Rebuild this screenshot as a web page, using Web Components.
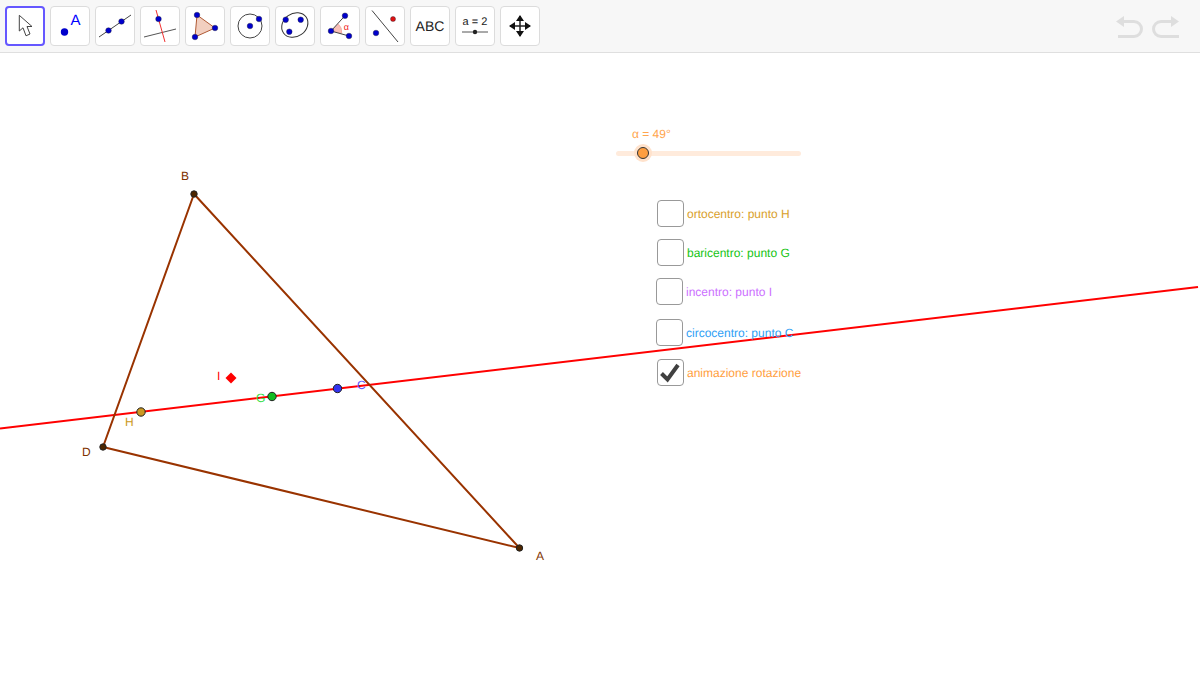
<!DOCTYPE html>
<html lang="it">
<head>
<meta charset="utf-8">
<title>Triangolo</title>
<style>
html,body{margin:0;padding:0;background:#fff;height:100%;overflow:hidden}
body{font-family:"Liberation Sans",Arial,sans-serif;text-rendering:geometricPrecision}
</style>
</head>
<body>
<ggb-app></ggb-app>
<script>
class ToolButton extends HTMLElement{
  constructor(){super();this.attachShadow({mode:'open'}).innerHTML=`<style>
    :host{display:block;width:40px;height:40px;box-sizing:border-box;background:#fff;border:1px solid #dcdcdc;border-radius:4px;position:relative;flex:none}
    :host([selected]){border:2px solid #6557ff}
    ::slotted(svg){position:absolute;left:-1px;top:-1px;display:block}
    :host([selected]) ::slotted(svg){left:-2px;top:-2px}
  </style><slot></slot>`;}
}
customElements.define('tool-button',ToolButton);

class UndoBar extends HTMLElement{
  constructor(){super();this.attachShadow({mode:'open'}).innerHTML=`<style>
    :host{display:flex;gap:6px;margin-left:auto;margin-right:20px;align-self:flex-start;margin-top:6px}
    svg{display:block}
  </style>
  <svg width="29" height="28" viewBox="0 0 29 28"><path d="M8 9.500H19a7 7 0 0 1 0 15H3" fill="none" stroke="#dedede" stroke-width="3"/><path d="M1 9.500L9 4V15Z" fill="#dedede"/></svg>
  <svg width="30" height="28" viewBox="0 0 30 28"><path d="M21 9.500H11a7 7 0 0 0 0 15H29" fill="none" stroke="#dedede" stroke-width="3"/><path d="M29 9.500L21 4V15Z" fill="#dedede"/></svg>`;}
}
customElements.define('undo-bar',UndoBar);

const P=(x,y,r=2.8,f='#0000cc')=>`<circle cx="${x}" cy="${y}" r="${r}" fill="${f}" stroke="#223" stroke-width=".4"/>`;
const ic=b=>`<svg width="40" height="40" viewBox="0 0 40 40" xmlns="http://www.w3.org/2000/svg" font-family="Liberation Sans, Arial, sans-serif">${b}</svg>`;

class GgbToolbar extends HTMLElement{
  constructor(){super();this.attachShadow({mode:'open'}).innerHTML=`<style>
    :host{display:flex;box-sizing:border-box;height:53px;background:#f7f7f7;border-bottom:1px solid #dfdfdf;padding:6px 0 0 5px;gap:5px;flex:none}
  </style>
  <tool-button selected>${ic(`<path d="M14.300 9.300V25L18 21.800L21 29.800L25 28L22 20.500H27Z" fill="#fff" stroke="#444" stroke-width="1" stroke-linejoin="round"/>`)}</tool-button>
  <tool-button>${ic(`<circle cx="14.500" cy="26" r="3.700" fill="#0000cc"/><text x="20.500" y="19" font-size="15" fill="#0000ff">A</text>`)}</tool-button>
  <tool-button>${ic(`<line x1="4" y1="31" x2="36" y2="9" stroke="#444" stroke-width="1"/>${P(13.5,24.5)}${P(26.5,15.5)}`)}</tool-button>
  <tool-button>${ic(`<line x1="4" y1="31" x2="36" y2="23" stroke="#555" stroke-width="1"/><line x1="16" y1="4" x2="25" y2="36" stroke="#f03030" stroke-width="1"/>${P(18.5,13)}`)}</tool-button>
  <tool-button>${ic(`<path d="M12 9L30 22L10 31Z" fill="#f2cfc0" stroke="#b05a35" stroke-width="1"/>${P(12,9)}${P(30,22)}${P(10,31)}`)}</tool-button>
  <tool-button>${ic(`<circle cx="20" cy="20" r="12" fill="none" stroke="#444" stroke-width="1"/>${P(20,20)}${P(29,13)}`)}</tool-button>
  <tool-button>${ic(`<ellipse cx="19.800" cy="19" rx="13.800" ry="11.500" transform="rotate(-35 19.800 19)" fill="none" stroke="#333" stroke-width="1"/>${P(10.7,13.7)}${P(25.7,13.7)}${P(14.3,25.7)}`)}</tool-button>
  <tool-button>${ic(`<path d="M11 25L18.300 18A10.500 10.500 0 0 1 21.700 27.300Z" fill="#f9c0b8" stroke="#ee9a90" stroke-width=".6"/><path d="M25 9.700L11 25L29 30" fill="none" stroke="#444" stroke-width="1"/><text x="23.800" y="23.500" font-size="9" fill="#f02020">α</text>${P(25,9.7)}${P(11,25)}${P(29,30)}`)}</tool-button>
  <tool-button>${ic(`<line x1="7" y1="4.500" x2="33" y2="36" stroke="#444" stroke-width="1"/>${P(28,13,2.5,'#e01010')}${P(11,27)}`)}</tool-button>
  <tool-button>${ic(`<text x="20" y="25" font-size="14" fill="#222" text-anchor="middle">ABC</text>`)}</tool-button>
  <tool-button>${ic(`<text x="20" y="19" font-size="11" fill="#222" text-anchor="middle">a = 2</text><line x1="7" y1="26" x2="33" y2="26" stroke="#555" stroke-width="1"/><circle cx="20" cy="26" r="2.200" fill="#222"/>`)}</tool-button>
  <tool-button>${ic(`<path d="M20 10V30M10 20H30" stroke="#222" stroke-width="1.500"/><path d="M20 9L16 15H24ZM20 31L16 25H24ZM9 20L15 16V24ZM31 20L25 16V24Z" fill="#111"/>`)}</tool-button>
  <undo-bar></undo-bar>`;}
}
customElements.define('ggb-toolbar',GgbToolbar);

class GgbCheck extends HTMLElement{
  constructor(){super();this.attachShadow({mode:'open'}).innerHTML=`<style>
    :host{position:absolute;display:flex;align-items:center;gap:3px;font:12px "Liberation Sans",Arial,sans-serif;white-space:nowrap;color:var(--c)}
    .b{width:27px;height:27px;box-sizing:border-box;border:1.500px solid #999;border-radius:4px;display:block;flex:none}
    svg{display:block;overflow:visible}
  </style><span class="b"></span><slot></slot>`;}
  connectedCallback(){ if(this.hasAttribute('checked')) this.shadowRoot.querySelector('.b').innerHTML='<svg width="24" height="24" viewBox="0 0 24 24"><path d="M3.500 13.500L9.500 19.500L20 5" fill="none" stroke="#404040" stroke-width="4"/></svg>'; }
}
customElements.define('ggb-check',GgbCheck);

class GgbSlider extends HTMLElement{
  constructor(){super();this.attachShadow({mode:'open'}).innerHTML=`<style>
    :host{position:absolute;left:616px;top:73px;width:185px;height:36px;display:block;font:12px "Liberation Sans",Arial,sans-serif;color:#ffa54d}
    .l{position:absolute;left:16px;top:1px;white-space:nowrap}
    .t{position:absolute;left:0;right:0;top:24.500px;height:5px;border-radius:3px;background:#ffebdc}
    .h{position:absolute;left:18px;top:18px;width:18px;height:18px;border-radius:50%;background:#ffe2cc;display:grid;place-items:center}
    .k{width:10px;height:10px;border-radius:50%;background:#ff9e40;border:1px solid #333}
  </style><span class="l">α = 49°</span><span class="t"></span><span class="h"><span class="k"></span></span>`;}
}
customElements.define('ggb-slider',GgbSlider);

class GgbCanvas extends HTMLElement{
  constructor(){super();
    const pt=(x,y,f,r=4.2)=>`<circle cx="${x}" cy="${y}" r="${r}" fill="${f}" stroke="#222" stroke-width="1"/>`;
    const lb=(x,y,f,t)=>`<text x="${x}" y="${y}" fill="${f}" font-size="12">${t}</text>`;
    this.attachShadow({mode:'open'}).innerHTML=`<style>
    :host{display:block;position:relative;flex:1;background:#fff;overflow:hidden}
    svg{position:absolute;left:0;top:0;display:block}
    text{font-family:"Liberation Sans",Arial,sans-serif}
    ggb-check:nth-of-type(1){left:657px;top:147px}
    ggb-check:nth-of-type(2){left:657px;top:186px}
    ggb-check:nth-of-type(3){left:656px;top:225px}
    ggb-check:nth-of-type(4){left:656px;top:266px}
    ggb-check:nth-of-type(5){left:657px;top:306px}
  </style>
  <svg width="1200" height="647" viewBox="0 53 1200 647">
    <line x1="0" y1="428.500" x2="1198" y2="287" stroke="#ff0000" stroke-width="2"/>
    <path d="M194 194L103 447L519.500 548Z" fill="none" stroke="#993300" stroke-width="2"/>
    ${pt(194,194,'#4d2600',3.2)}${pt(103,447,'#4d2600',3.2)}${pt(519.5,548,'#4d2600',3.2)}
    ${pt(141,412,'#cc9922')}${pt(272,396.5,'#11bb22')}${pt(337.5,388.5,'#3333ee')}
    <path d="M231 372.500L236.500 378L231 383.500L225.500 378Z" fill="#ff0000"/>
    ${lb(181,180,'#803300','B')}${lb(82,456,'#803300','D')}${lb(536,560,'#803300','A')}
    ${lb(125,426,'#cc9922','H')}${lb(256,402,'#33dd44','G')}${lb(357,389,'#5555ff','C')}${lb(217,380,'#ff0000','I')}
  </svg>
  <ggb-slider></ggb-slider>
  <ggb-check style="--c:#d9a02a">ortocentro: punto H</ggb-check>
  <ggb-check style="--c:#14c414">baricentro: punto G</ggb-check>
  <ggb-check style="--c:#cc70ff">incentro: punto I</ggb-check>
  <ggb-check style="--c:#2fa0f5">circocentro: punto C</ggb-check>
  <ggb-check checked style="--c:#ff9e40">animazione rotazione</ggb-check>`;}
}
customElements.define('ggb-canvas',GgbCanvas);

class GgbApp extends HTMLElement{
  constructor(){super();this.attachShadow({mode:'open'}).innerHTML=`<style>
    :host{display:flex;flex-direction:column;width:1200px;height:700px}
  </style><ggb-toolbar></ggb-toolbar><ggb-canvas></ggb-canvas>`;}
}
customElements.define('ggb-app',GgbApp);
</script>
</body>
</html>
